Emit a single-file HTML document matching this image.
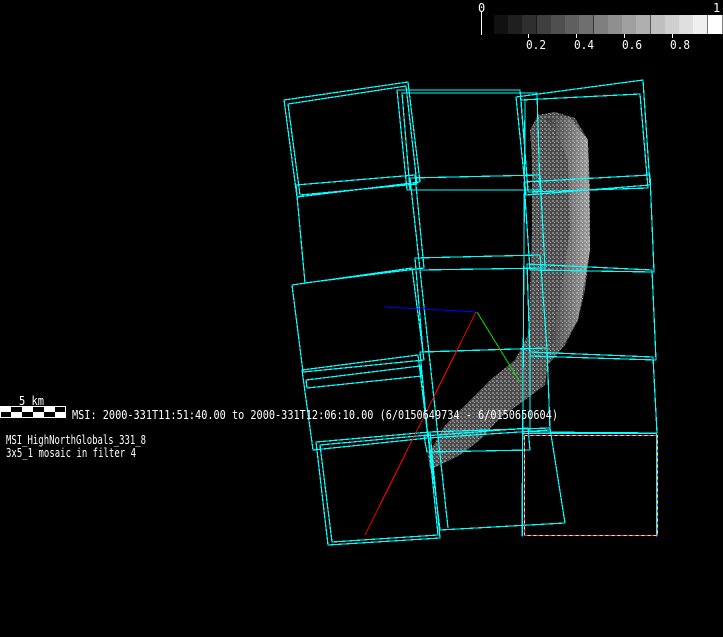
<!DOCTYPE html>
<html><head><style>
html,body{margin:0;padding:0;background:#000;width:723px;height:637px;overflow:hidden}
svg{position:absolute;left:0;top:0}
text{font-family:"DejaVu Sans Mono","Liberation Mono",monospace;fill:#fff;font-size:12px}
</style></head><body>
<svg width="723" height="637" viewBox="0 0 723 637" shape-rendering="crispEdges">
<defs>
<pattern id="p" width="4" height="4" patternUnits="userSpaceOnUse"><rect width="4" height="4" fill="#4a4a4a"/><rect width="2" height="2" fill="#808080"/><rect x="2" y="2" width="1" height="1" fill="#aaa"/></pattern>
<linearGradient id="g" x1="0" x2="1"><stop offset="0" stop-color="#222" stop-opacity="0.5"/><stop offset="1" stop-color="#fff" stop-opacity="0.45"/></linearGradient>
</defs>
<g>
<rect x="494" y="15" width="14.3" height="19" fill="#111"/>
<rect x="508" y="15" width="14.3" height="19" fill="#1f1f1f"/>
<rect x="522" y="15" width="14.3" height="19" fill="#2f2f2f"/>
<rect x="537" y="15" width="14.3" height="19" fill="#3f3f3f"/>
<rect x="551" y="15" width="14.3" height="19" fill="#4f4f4f"/>
<rect x="565" y="15" width="14.3" height="19" fill="#5f5f5f"/>
<rect x="579" y="15" width="14.3" height="19" fill="#6f6f6f"/>
<rect x="594" y="15" width="14.3" height="19" fill="#7f7f7f"/>
<rect x="608" y="15" width="14.3" height="19" fill="#8f8f8f"/>
<rect x="622" y="15" width="14.3" height="19" fill="#9f9f9f"/>
<rect x="636" y="15" width="14.3" height="19" fill="#afafaf"/>
<rect x="651" y="15" width="14.3" height="19" fill="#bfbfbf"/>
<rect x="665" y="15" width="14.3" height="19" fill="#cfcfcf"/>
<rect x="679" y="15" width="14.3" height="19" fill="#dfdfdf"/>
<rect x="693" y="15" width="14.3" height="19" fill="#efefef"/>
<rect x="708" y="15" width="14.3" height="19" fill="#fff"/>
</g>
<g stroke="#fff" stroke-width="1">
<line x1="481.5" y1="12" x2="481.5" y2="35"/>
<line x1="528.5" y1="34" x2="528.5" y2="38"/>
<line x1="576.5" y1="34" x2="576.5" y2="38"/>
<line x1="624.5" y1="34" x2="624.5" y2="38"/>
<line x1="672.5" y1="34" x2="672.5" y2="38"/>
</g>
<text x="478" y="12">0</text><text x="713" y="12">1</text>
<text x="526" y="49" textLength="20" lengthAdjust="spacingAndGlyphs">0.2</text><text x="574" y="49" textLength="20" lengthAdjust="spacingAndGlyphs">0.4</text><text x="622" y="49" textLength="20" lengthAdjust="spacingAndGlyphs">0.6</text><text x="670" y="49" textLength="20" lengthAdjust="spacingAndGlyphs">0.8</text>
<path d="M538 115 L555 112 L575 118 L588 140 L590 190 L590 250 L585 290 L578 320 L565 345 L548 365 L545 385 L525 400 L500 418 L480 440 L460 455 L430 470 L428 455 L445 425 L470 400 L490 380 L515 360 L528 335 L530 290 L532 230 L532 160 L530 130 Z" fill="url(#p)"/>
<path d="M545 118 L570 118 L588 140 L590 250 L578 320 L560 350 L550 340 L560 300 L570 230 L568 160 L555 130 Z" fill="url(#g)"/>
<g stroke="#00ffff" stroke-width="1.2" fill="none">
<polygon points="284,100 408,82 420,182 297,197"/>
<polygon points="288,104 406,86 417,184 300,195"/>
<polygon points="397,90 520,90 528,190 407,190"/>
<polygon points="402,93 537,93 540,190 410,190"/>
<polygon points="516,97 643,80 650,185 526,195"/>
<polygon points="521,100 640,94 648,188 528,192"/>
<polygon points="296,185 415,175 424,268 305,283"/>
<polygon points="410,178 540,175 545,268 420,270"/>
<polygon points="524,182 650,175 654,272 530,270"/>
<polygon points="292,285 412,268 424,360 303,372"/>
<polygon points="415,258 540,255 547,348 423,352"/>
<polygon points="527,264 652,270 656,360 530,356"/>
<polygon points="302,370 418,355 428,438 313,450"/>
<polygon points="420,352 547,348 550,430 428,438"/>
<polygon points="530,352 653,357 657,433 530,432"/>
<polygon points="316,442 430,432 440,538 328,545"/>
<polygon points="320,445 428,435 438,535 332,542"/>
<polygon points="428,432 550,428 565,523 440,530"/>
<polygon points="424,436 528,428 530,450 427,452"/>
<polygon points="306,380 420,366 422,376 307,388"/>
<line x1="410" y1="178" x2="448" y2="528"/>
<line x1="525" y1="100" x2="522" y2="536"/>
<polyline points="522.5,536.5 522.5,433.5 656.5,433.5 656.5,536.5"/>
</g>
<rect x="524.5" y="435.5" width="133" height="100" fill="none" stroke="#ffff00" stroke-dasharray="3,3"/>
<rect x="524.5" y="435.5" width="133" height="100" fill="none" stroke="#ff00ff" stroke-dasharray="3,3" stroke-dashoffset="3"/>
<line x1="384" y1="307" x2="477" y2="312" stroke="#0000ff"/>
<line x1="477" y1="312" x2="520" y2="382" stroke="#00dd00"/>
<line x1="476" y1="312" x2="365" y2="535" stroke="#ff0000"/>
<rect x="0.5" y="406.5" width="65" height="11" fill="#fff" stroke="#fff"/>
<g fill="#000">
<rect x="11" y="407" width="11" height="5"/><rect x="33" y="407" width="11" height="5"/><rect x="55" y="407" width="10" height="5"/>
<rect x="1" y="412" width="10" height="5"/><rect x="22" y="412" width="11" height="5"/><rect x="44" y="412" width="11" height="5"/>
</g>
<text x="19" y="405" textLength="25" lengthAdjust="spacingAndGlyphs">5 km</text>
<text x="72" y="419" textLength="486" lengthAdjust="spacingAndGlyphs">MSI:  2000-331T11:51:40.00 to 2000-331T12:06:10.00 (6/0150649734 - 6/0150650604)</text>
<text x="6" y="444" textLength="140" lengthAdjust="spacingAndGlyphs">MSI_HighNorthGlobals_331_8</text>
<text x="6" y="457" textLength="130" lengthAdjust="spacingAndGlyphs">3x5_1 mosaic in filter 4</text>
</svg>
</body></html>
